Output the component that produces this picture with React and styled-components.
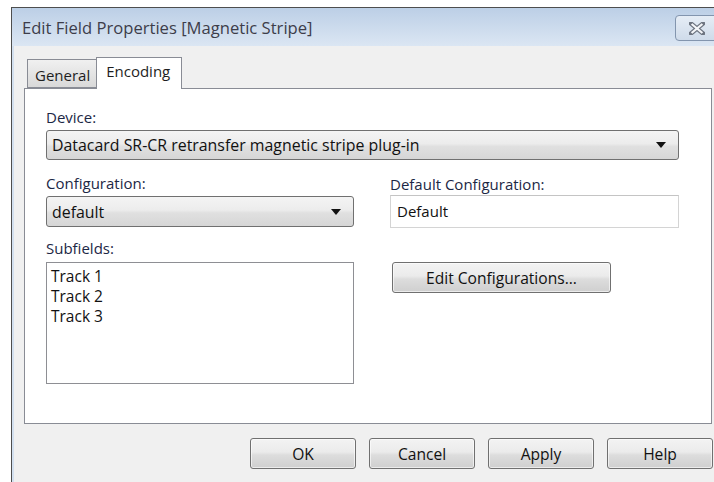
import React from "react";
import styled, { createGlobalStyle } from "styled-components";

const Global = createGlobalStyle`
  html, body {
    margin: 0;
    background: #ffffff;
    overflow: hidden;
  }
  body {
    font-family: "Open Sans", "Liberation Sans", Arial, sans-serif;
    font-size: 15px;
  }
`;

const Window = styled.div`
  margin: 7px 0 0 11px;
  width: 712px;
  height: 480px;
  border-top: 1px solid #4e4e4e;
  border-left: 1px solid #4e4e4e;
  background: #f0f0f0;
  display: flex;
  flex-direction: column;
`;

const TitleBar = styled.div`
  height: 38px;
  flex-shrink: 0;
  display: flex;
  align-items: flex-start;
  padding: 0 6px 0 10px;
  background: linear-gradient(#bccfe6, #dbe6f3);
  box-sizing: border-box;
`;

const Title = styled.div`
  flex: 1;
  line-height: 40px;
  color: #3d3d4a;
  font-size: 16.6px;
`;

const CloseButton = styled.div`
  margin-top: 7px;
  width: 43px;
  height: 26px;
  box-sizing: border-box;
  border: 1px solid #8395ae;
  border-radius: 4px;
  background: linear-gradient(#e6edf6, #cfdbea);
  display: flex;
  align-items: center;
  justify-content: center;
`;

const Frame = styled.div`
  flex: 1;
  border-left: 2px solid #d3e0ef;
  padding: 11px 0 0 10px;
`;

const TabStrip = styled.div`
  display: flex;
  align-items: flex-end;
  padding-left: 3px;
  position: relative;
  z-index: 1;
`;

const Tab = styled.div`
  box-sizing: border-box;
  height: ${(p) => (p.active ? "32px" : "29px")};
  padding: ${(p) => (p.active ? "0 11px 0 9px" : "0 6px 0 7px")};
  margin-bottom: ${(p) => (p.active ? "-1px" : "0")};
  margin-left: ${(p) => (p.active ? "-1px" : "0")};
  border: 1px solid #898c95;
  border-bottom: ${(p) => (p.active ? "none" : "1px solid #898c95")};
  background: ${(p) =>
    p.active ? "#ffffff" : "linear-gradient(#f0f0f0, #d9d9d9)"};
  line-height: ${(p) => (p.active ? "26px" : "31px")};
  color: #1e1e1e;
  font-size: 15px;
`;

const Panel = styled.div`
  width: 688px;
  height: 336px;
  box-sizing: border-box;
  border: 1px solid #898c95;
  background: #ffffff;
  padding: 19px 31px 0 21px;
`;

const Grid = styled.div`
  display: grid;
  grid-template-columns: 308px 289px;
  column-gap: 36px;
`;

const Field = styled.div`
  display: flex;
  flex-direction: column;
  grid-column: ${(p) => p.span || "auto"};
  margin-top: ${(p) => p.top || "0"};
`;

const Label = styled.div`
  line-height: 18px;
  height: 18px;
  margin-bottom: ${(p) => p.gap || "4px"};
  color: #1c2745;
  font-size: 15px;
`;

const Select = styled.div`
  box-sizing: border-box;
  height: ${(p) => p.h || "30px"};
  border: 1px solid #707070;
  border-radius: 3px;
  background: linear-gradient(#f4f4f4 0%, #ececec 45%, #e0e0e0 55%, #d6d6d6 100%);
  display: flex;
  align-items: center;
  justify-content: space-between;
  padding: 0 12px 0 5px;
  color: #111111;
  font-size: 15.9px;
`;

const Arrow = styled.span`
  width: 0;
  height: 0;
  border-left: 5px solid transparent;
  border-right: 5px solid transparent;
  border-top: 6px solid #111111;
`;

const TextBox = styled.div`
  box-sizing: border-box;
  height: 33px;
  border: 1px solid #d4d4d4;
  border-top-color: #c4c4c4;
  background: #ffffff;
  padding: 0 6px;
  line-height: 31px;
  color: #111111;
`;

const ListBox = styled.div`
  box-sizing: border-box;
  height: 122px;
  border: 1px solid #8e8f94;
  background: #ffffff;
  padding: 3px 4px;
  color: #111111;
`;

const ListItem = styled.div`
  line-height: 20px;
  font-size: 15.5px;
`;

const Button = styled.div`
  box-sizing: border-box;
  width: ${(p) => p.w || "106px"};
  height: 31px;
  margin-left: ${(p) => p.left || "0"};
  border: 1px solid #707070;
  border-radius: 3px;
  background: linear-gradient(#f3f3f3 0%, #ebebeb 45%, #dddddd 55%, #cfcfcf 100%);
  box-shadow: inset 0 0 0 1px rgba(255, 255, 255, 0.6);
  display: flex;
  align-items: center;
  justify-content: center;
  color: #111111;
  font-size: 15.6px;
`;

const ButtonRow = styled.div`
  width: 689px;
  display: flex;
  justify-content: flex-end;
  gap: 13px;
  margin-top: 14px;
`;

function CloseGlyph() {
  return (
    <svg width="16" height="13" viewBox="0 0 16 13">
      <path
        d="M2 1.5 L14 11.5 M14 1.5 L2 11.5"
        stroke="#6d7480"
        strokeWidth="4.4"
        strokeLinecap="square"
      />
      <path
        d="M2.6 2 L13.4 11 M13.4 2 L2.6 11"
        stroke="#f4f6f9"
        strokeWidth="2.2"
        strokeLinecap="butt"
      />
    </svg>
  );
}

export default function App() {
  const tracks = ["Track 1", "Track 2", "Track 3"];
  return (
    <>
      <Global />
      <Window>
        <TitleBar>
          <Title>Edit Field Properties [Magnetic Stripe]</Title>
          <CloseButton>
            <CloseGlyph />
          </CloseButton>
        </TitleBar>
        <Frame>
          <TabStrip>
            <Tab>General</Tab>
            <Tab active>Encoding</Tab>
          </TabStrip>
          <Panel>
            <Grid>
              <Field span="1 / 3">
                <Label>Device:</Label>
                <Select>
                  Datacard SR-CR retransfer magnetic stripe plug-in
                  <Arrow />
                </Select>
              </Field>
              <Field top="14px">
                <Label>Configuration:</Label>
                <Select h="31px">
                  default
                  <Arrow />
                </Select>
              </Field>
              <Field top="15px">
                <Label gap="2px">Default Configuration:</Label>
                <TextBox>Default</TextBox>
              </Field>
              <Field top="11px">
                <Label gap="5px">Subfields:</Label>
                <ListBox>
                  {tracks.map((t) => (
                    <ListItem key={t}>{t}</ListItem>
                  ))}
                </ListBox>
              </Field>
              <Field top="34px">
                <Button w="219px" left="2px">
                  Edit Configurations...
                </Button>
              </Field>
            </Grid>
          </Panel>
          <ButtonRow>
            <Button>OK</Button>
            <Button>Cancel</Button>
            <Button>Apply</Button>
            <Button>Help</Button>
          </ButtonRow>
        </Frame>
      </Window>
    </>
  );
}
